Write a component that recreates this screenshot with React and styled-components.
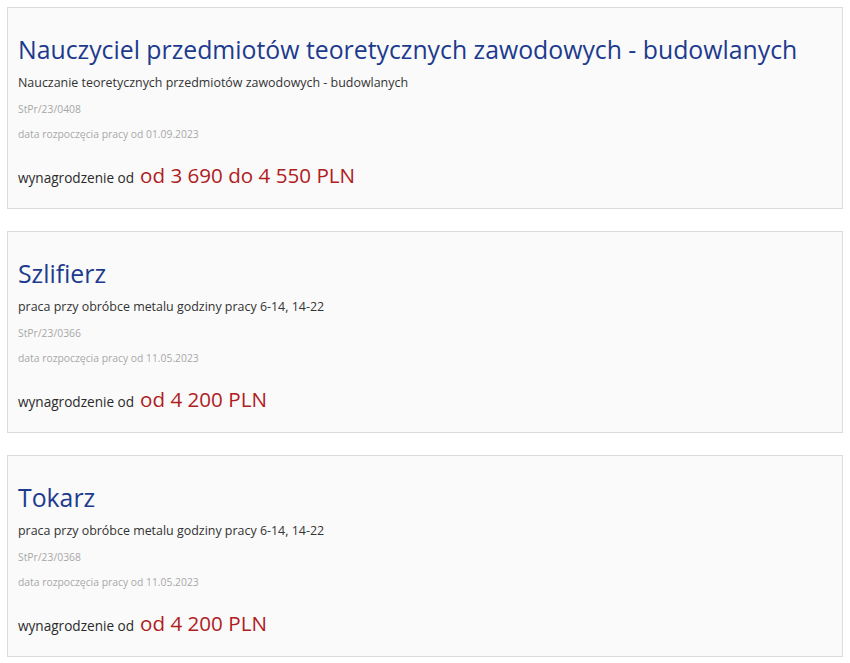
import React from 'react';
import styled, { createGlobalStyle } from 'styled-components';

const GlobalStyle = createGlobalStyle`
  body {
    margin: 0;
    background: #ffffff;
    font-family: "Open Sans", "Noto Sans", sans-serif;
  }
`;

const List = styled.div`
  display: flex;
  flex-direction: column;
  gap: 22px;
  padding: 7px;
`;

const Card = styled.div`
  background: #fafafa;
  border: 1px solid #dcdcdc;
  padding: 27px 10px 19px 10px;
`;

const Title = styled.h2`
  margin: 0;
  font-size: 24.8px;
  line-height: 28px;
  font-weight: 400;
  color: #1d3b8e;
  white-space: nowrap;
`;

const Description = styled.p`
  margin: 11px 0 0;
  font-size: 12.45px;
  line-height: 18px;
  color: #333333;
`;

const Meta = styled.p`
  margin: 9px 0 0;
  font-size: 10.35px;
  line-height: 16px;
  color: #a8a8a8;
`;

const SalaryRow = styled.div`
  display: flex;
  align-items: baseline;
  gap: 6px;
  height: 28px;
  margin-top: 19px;
`;

const SalaryLabel = styled.span`
  font-size: 13.6px;
  line-height: 1;
  color: #2a2a2a;
`;

const SalaryValue = styled.span`
  font-size: 20.6px;
  line-height: 28px;
  color: #b0201f;
`;

const offers = [
  {
    title: 'Nauczyciel przedmiotów teoretycznych zawodowych - budowlanych',
    description: 'Nauczanie teoretycznych przedmiotów zawodowych - budowlanych',
    ref: 'StPr/23/0408',
    start: '01.09.2023',
    salary: 'od 3 690 do 4 550 PLN',
  },
  {
    title: 'Szlifierz',
    description: 'praca przy obróbce metalu godziny pracy 6-14, 14-22',
    ref: 'StPr/23/0366',
    start: '11.05.2023',
    salary: 'od 4 200 PLN',
  },
  {
    title: 'Tokarz',
    description: 'praca przy obróbce metalu godziny pracy 6-14, 14-22',
    ref: 'StPr/23/0368',
    start: '11.05.2023',
    salary: 'od 4 200 PLN',
  },
];

function OfferCard({ offer }) {
  return (
    <Card>
      <Title>{offer.title}</Title>
      <Description>{offer.description}</Description>
      <Meta>{offer.ref}</Meta>
      <Meta>data rozpoczęcia pracy od {offer.start}</Meta>
      <SalaryRow>
        <SalaryLabel>wynagrodzenie od</SalaryLabel>
        <SalaryValue>{offer.salary}</SalaryValue>
      </SalaryRow>
    </Card>
  );
}

export default function App() {
  return (
    <>
      <GlobalStyle />
      <List>
        {offers.map((o) => (
          <OfferCard key={o.ref} offer={o} />
        ))}
      </List>
    </>
  );
}
